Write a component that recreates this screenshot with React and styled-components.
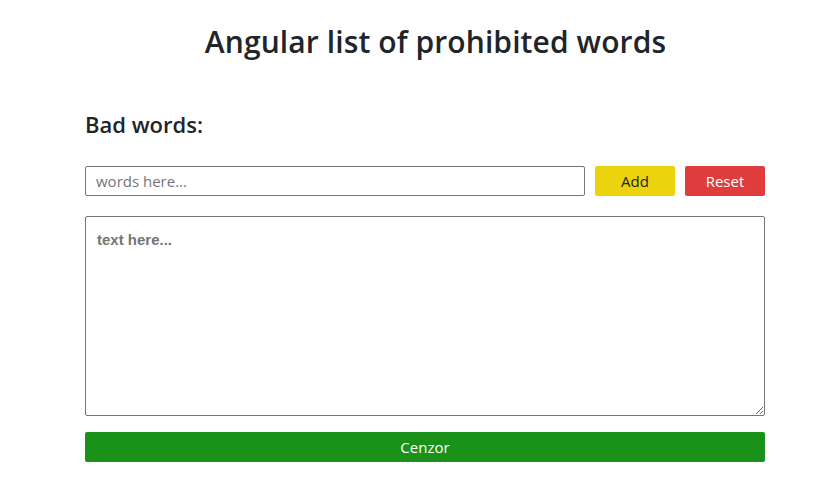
import React from 'react';
import styled, { createGlobalStyle } from 'styled-components';

const GlobalStyle = createGlobalStyle`
  body {
    margin: 0;
    background: #fff;
    color: #212529;
    font-family: "Open Sans", "Noto Sans", sans-serif;
  }
`;

const Page = styled.div`
  width: 835px;
  padding-top: 20px;
`;

const Title = styled.h1`
  margin: 0;
  padding-left: 36px;
  text-align: center;
  font-size: 30px;
  font-weight: 600;
  line-height: 44px;
  letter-spacing: 0.1px;
`;

const Content = styled.div`
  width: 680px;
  margin: 44px 0 0 85px;
  display: flex;
  flex-direction: column;
`;

const Subtitle = styled.h4`
  margin: 0 0 26px;
  font-size: 22px;
  font-weight: 600;
  line-height: 32px;
`;

const Row = styled.div`
  display: flex;
  gap: 10px;
  align-items: center;
  margin-bottom: 20px;
`;

const WordInput = styled.input`
  box-sizing: border-box;
  width: 500px;
  height: 30px;
  border: 1px solid #767676;
  border-radius: 2px;
  padding: 0 10px;
  font-family: "Open Sans", sans-serif;
  font-size: 15px;
  outline: none;
  &::placeholder { color: #757575; }
`;

const Button = styled.button`
  box-sizing: border-box;
  width: ${p => p.$wide ? '100%' : '80px'};
  height: 30px;
  border: none;
  border-radius: 2px;
  background: ${p => p.$bg};
  color: ${p => p.$fg};
  font-family: "Open Sans", sans-serif;
  font-size: 15px;
  cursor: pointer;
`;

const TextArea = styled.textarea`
  box-sizing: border-box;
  width: 680px;
  height: 200px;
  border: 1px solid #767676;
  border-radius: 2px;
  padding: 14px 11px;
  margin: 0 0 16px;
  font-family: "Liberation Sans", Arial, sans-serif;
  font-weight: bold;
  font-size: 15px;
  outline: none;
  display: block;
  &::placeholder { color: #757575; }
`;

export default function App() {
  return (
    <>
      <GlobalStyle />
      <Page>
        <Title>Angular list of prohibited words</Title>
        <Content>
          <Subtitle>Bad words:</Subtitle>
          <Row>
            <WordInput placeholder="words here..." />
            <Button $bg="#ebd30d" $fg="#212529">Add</Button>
            <Button $bg="#df3d3d" $fg="#fff">Reset</Button>
          </Row>
          <TextArea placeholder="text here..." />
          <Button $wide $bg="#1a921a" $fg="#fff">Cenzor</Button>
        </Content>
      </Page>
    </>
  );
}
